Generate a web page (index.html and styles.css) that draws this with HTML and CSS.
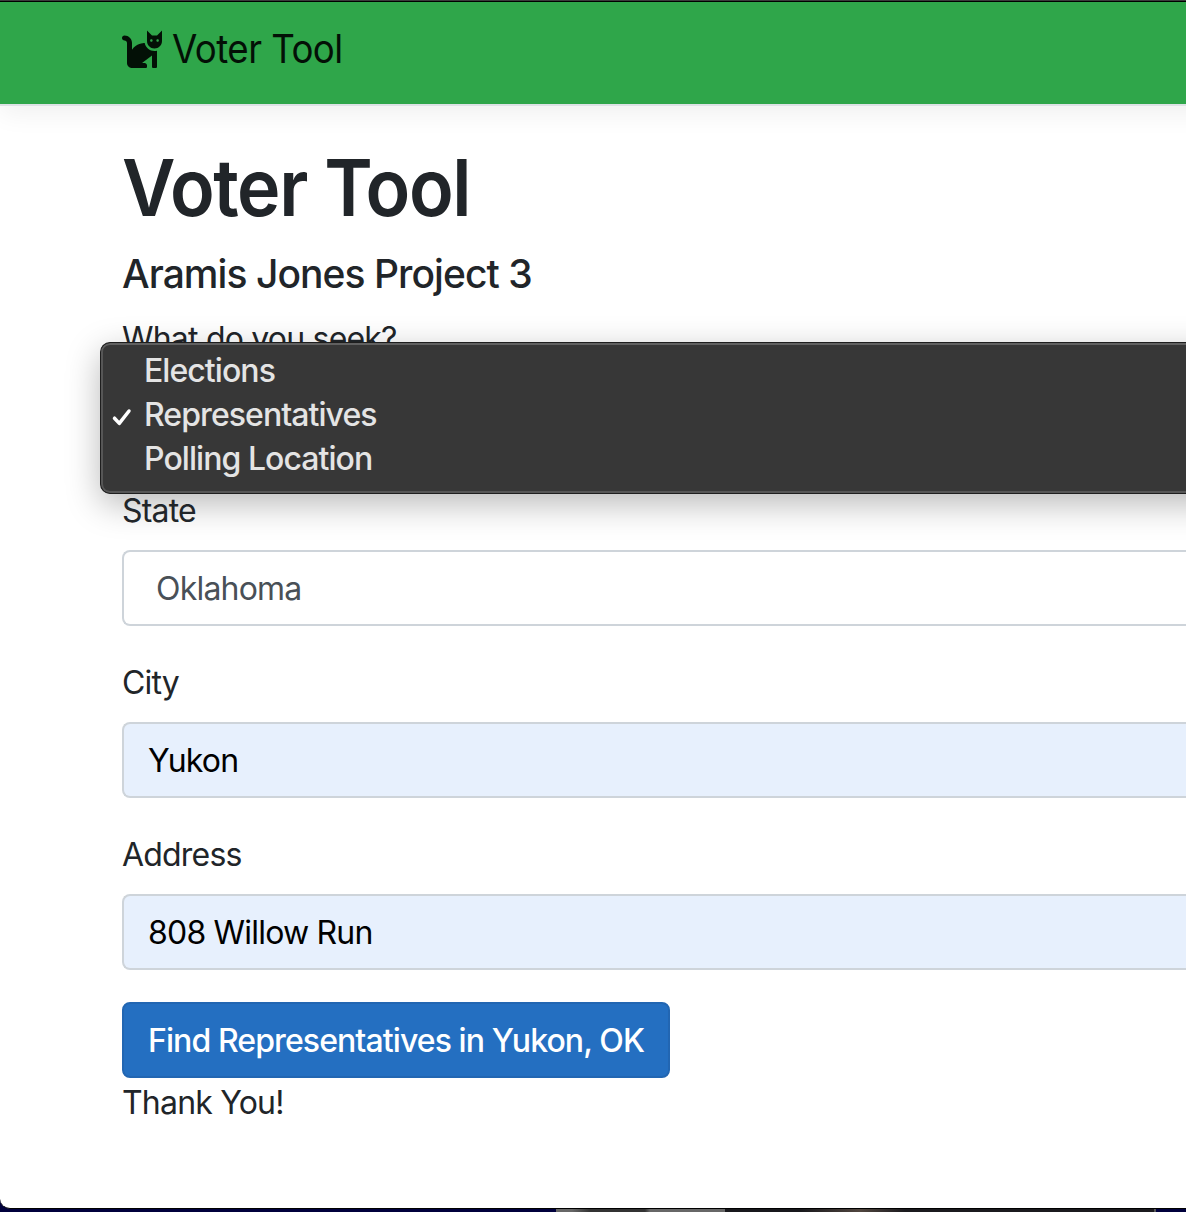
FILE: index.html
```html
<!DOCTYPE html>
<html lang="en">
<head>
<meta charset="utf-8">
<title>Voter Tool</title>
<link rel="stylesheet" href="styles.css">
</head>
<body>
<div class="window">
  <header class="navbar">
    <a class="brand">
      <svg class="brand-icon" viewBox="0 0 512 512" aria-hidden="true"><path d="M290.59 192c-20.18 0-106.82 1.98-162.59 85.95V192c0-52.94-43.06-96-96-96-17.67 0-32 14.33-32 32s14.33 32 32 32c17.64 0 32 14.36 32 32v256c0 35.3 28.7 64 64 64h176c8.84 0 16-7.16 16-16v-16c0-17.67-14.33-32-32-32h-32l128-96v144c0 8.84 7.16 16 16 16h32c8.84 0 16-7.16 16-16V289.86c-10.29 2.67-20.89 4.54-32 4.54-61.81 0-113.52-44.05-125.41-102.4zM448 96h-64l-64-64v134.4c0 53.02 42.98 96 96 96s96-42.98 96-96V32l-64 64zm-72 80c-8.84 0-16-7.16-16-16s7.16-16 16-16 16 7.16 16 16-7.16 16-16 16zm80 0c-8.84 0-16-7.16-16-16s7.16-16 16-16 16 7.16 16 16-7.16 16-16 16z"/></svg>
      <span class="brand-name">Voter Tool</span>
    </a>
  </header>
  <main class="content">
    <h1 class="title">Voter Tool</h1>
    <h4 class="subtitle">Aramis Jones Project 3</h4>
    <form class="form">
      <div class="group">
        <span class="label label-seek">What do you seek?</span>
        <div class="control"></div>
        <div class="menu">
          <div class="option"><span class="option-elections">Elections</span></div>
          <div class="option">
            <svg class="check" viewBox="0 0 20 20" aria-hidden="true"><path d="M2.5 11.2 7.3 16.4 17 4"/></svg>
            <span class="option-reps">Representatives</span>
          </div>
          <div class="option"><span class="option-polling">Polling Location</span></div>
        </div>
      </div>
      <div class="group">
        <span class="label label-state">State</span>
        <div class="control select"><span class="value-state">Oklahoma</span></div>
      </div>
      <div class="group">
        <span class="label label-city">City</span>
        <div class="control filled"><span class="value-city">Yukon</span></div>
      </div>
      <div class="group">
        <span class="label label-address">Address</span>
        <div class="control filled"><span class="value-address">808 Willow Run</span></div>
      </div>
      <button class="submit" type="button"><span class="submit-text">Find Representatives in Yukon, OK</span></button>
    </form>
    <p class="thanks">Thank You!</p>
  </main>
</div>
<footer class="desktop"></footer>
</body>
</html>
```
FILE: styles.css
```css
* {
  box-sizing: border-box;
}

body {
  margin: 0;
  height: 1212px;
  overflow: hidden;
  display: flex;
  flex-direction: column;
  background: #00003c;
  color: #212529;
  font: 400 32px/49px Inter, "Liberation Sans", sans-serif;
  letter-spacing: -0.8px;
  white-space: nowrap;
}

.window {
  flex: none;
  height: 1209px;
  overflow: hidden;
  border-top: 1px solid #3a3a3a;
  border-bottom: 1px solid #000;
  border-bottom-left-radius: 10px;
  background: #fff;
}

.navbar {
  height: 105px;
  margin-right: -60px;
  padding: 20px 122px 0;
  display: flex;
  align-items: flex-start;
  border-top: 1px solid #000;
  border-bottom: 2px solid #dee2e6;
  background: #2fa64a;
  box-shadow: 0 8px 24px rgba(0, 0, 0, 0.06);
}

.brand {
  display: flex;
  align-items: center;
  gap: 10px;
  height: 52px;
  color: #031006;
  font-size: 39px;
  letter-spacing: -0.6px;
}

.brand-icon {
  width: 40px;
  height: 40px;
  margin-top: -1px;
  fill: currentColor;
}

.brand-name {
  transform: scaleX(0.94);
  transform-origin: left;
}

.content {
  padding: 32px 0 0 122px;
}

.title {
  width: fit-content;
  margin: 0 0 16px;
  height: 96px;
  font-size: 79px;
  font-weight: 600;
  line-height: 98px;
  letter-spacing: -1.5px;
  transform: scaleX(0.931);
  transform-origin: left;
}

.subtitle {
  margin: 0 0 16px;
  font-size: 39px;
  font-weight: 500;
  line-height: 48px;
  letter-spacing: -0.95px;
}

.group {
  position: relative;
  margin-bottom: 32px;
}

.label {
  display: block;
  width: fit-content;
  height: 48px;
  margin-bottom: 16px;
}

.control {
  height: 76px;
  padding: 13px 24px 12px;
  display: flex;
  align-items: center;
  border: 2px solid #ced4da;
  border-right: 0;
  border-radius: 8px 0 0 8px;
  background: #fff;
}

.select {
  padding-left: 32px;
  color: #495057;
}

.filled {
  background: #e7f0fd;
  color: #000;
}

.menu {
  position: absolute;
  top: 28px;
  left: -22px;
  right: -60px;
  height: 152px;
  padding: 6px 0 0 43px;
  border: 1px solid #1e1e1e;
  border-right: 0;
  border-radius: 10px 0 0 10px;
  background: #373737;
  box-shadow: inset 0 2px #606060, inset 2px 0 #565656, inset 0 -2px #565656,
    0 10px 34px rgba(0, 0, 0, 0.28);
  color: #e4e4e4;
  font-weight: 500;
  letter-spacing: -0.94px;
}

.option {
  position: relative;
  height: 44px;
  line-height: 44px;
}

.check {
  position: absolute;
  left: -32px;
  top: 14px;
  width: 20px;
  height: 20px;
  fill: none;
  stroke: #fff;
  stroke-width: 3.5;
  stroke-linecap: round;
  stroke-linejoin: round;
}

.submit {
  display: block;
  width: 548px;
  height: 76px;
  padding: 1px 24px 0;
  border: 2px solid #2266b2;
  border-radius: 8px;
  background: #246fc1;
  color: #fff;
  font: inherit;
  font-weight: 500;
  letter-spacing: -0.91px;
  text-align: left;
}

.thanks {
  margin: 0;
  width: fit-content;
}

.desktop {
  flex: 1;
  background: linear-gradient(90deg, #00003c 556px, #676767 556px 572px, #333 590px 645px, #676767 650px 725px, #18181c 725px 800px, #51463f 860px, #1b1a1e 905px 1154px, #555 1154px 1156px, #00003c 1156px);
}
```
